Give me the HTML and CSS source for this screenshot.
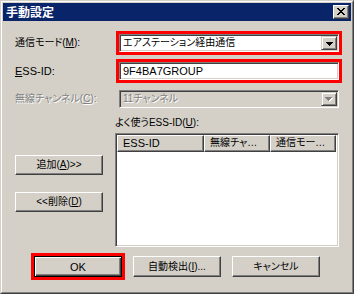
FILE: index.html
```html
<!DOCTYPE html>
<html lang="ja">
<head>
<meta charset="utf-8">
<title>手動設定</title>
<link rel="stylesheet" href="styles.css">
</head>
<body>
<div class="window">
  <div class="frame">
    <div class="titlebar">
      <span class="title">手動設定</span>
      <span class="close"><svg width="8" height="7" viewBox="0 0 8 7" shape-rendering="crispEdges"><path d="M0 0h2v1h-2zM6 0h2v1h-2zM1 1h2v1h-2zM5 1h2v1h-2zM2 2h4v1h-4zM3 3h2v1h-2zM2 4h4v1h-4zM1 5h2v1h-2zM5 5h2v1h-2zM0 6h2v1h-2zM6 6h2v1h-2z" fill="#000"/></svg></span>
    </div>
    <div class="content">
      <div class="form">
        <span class="lbl ja">通信モード(<u>M</u>):</span>
        <div class="combo hl"><span class="value ja">エアステーション経由通信</span><span class="drop"><svg width="7" height="4" viewBox="0 0 7 4" shape-rendering="crispEdges"><path d="M0 0h7v1h-7zM1 1h5v1h-5zM2 2h3v1h-3zM3 3h1v1h-1z" fill="#000"/></svg></span></div>
        <span class="lbl"><u>E</u>SS-ID:</span>
        <div class="edit hl"><span class="value">9F4BA7GROUP</span></div>
        <span class="lbl ja disabled">無線チャンネル(<u>C</u>):</span>
        <div class="combo off"><span class="value ja">11チャンネル</span><span class="drop"><svg width="8" height="5" viewBox="0 0 8 5" shape-rendering="crispEdges"><path d="M1 1h7v1h-7zM2 2h5v1h-5zM3 3h3v1h-3zM4 4h1v1h-1z" fill="#fff"/><path d="M0 0h7v1h-7zM1 1h5v1h-5zM2 2h3v1h-3zM3 3h1v1h-1z" fill="#808080"/></svg></span></div>
      </div>
      <div class="lists">
        <div class="side">
          <span class="btn ja add">追加(<u>A</u>)&gt;&gt;</span>
          <span class="btn ja del">&lt;&lt;削除(<u>D</u>)</span>
        </div>
        <div class="main">
          <div class="listlabel ja">よく使うESS-ID(<u>U</u>):</div>
          <div class="listview">
            <div class="header">
              <span class="col c1">ESS-ID</span>
              <span class="col ja c2">無線チャ…</span>
              <span class="col ja c3">通信モー…</span>
            </div>
          </div>
        </div>
      </div>
      <div class="actions">
        <span class="btn default">OK</span>
        <span class="btn ja">自動検出(<u>I</u>)...</span>
        <span class="btn ja">キャンセル</span>
      </div>
    </div>
  </div>
</div>
</body>
</html>
```
FILE: styles.css
```css
html, body {
  margin: 0;
  padding: 0;
  background: #D4D0C8;
}
body {
  font-family: "Liberation Sans", "Noto Sans CJK JP", sans-serif;
  font-size: 11px;
  color: #000;
  font-feature-settings: "palt";
}
.ja {
  font-size: 10px;
}
u { text-decoration: underline; text-underline-offset: 1px; }

.window {
  width: 354px;
  height: 294px;
  box-sizing: border-box;
  background: #D4D0C8;
  border: 1px solid;
  border-color: #D4D0C8 #404040 #404040 #D4D0C8;
}
.frame {
  height: 100%;
  box-sizing: border-box;
  border: 1px solid;
  border-color: #FFFFFF #808080 #808080 #FFFFFF;
  padding: 1px;
}
.titlebar {
  height: 18px;
  background: #0A246A;
  display: flex;
  align-items: center;
  justify-content: space-between;
  padding: 0 2px 0 3px;
}
.title {
  color: #fff;
  font-family: "Noto Sans CJK JP", sans-serif;
  font-weight: bold;
  font-size: 12px;
  line-height: 18px;
  font-feature-settings: normal;
}
.close {
  width: 16px;
  height: 14px;
  box-sizing: border-box;
  background: #D4D0C8;
  border: 1px solid;
  border-color: #FFFFFF #404040 #404040 #FFFFFF;
  box-shadow: inset -1px -1px #808080;
  display: flex;
  align-items: center;
  justify-content: center;
  padding: 0 1px 1px 0;
}
.close svg { display: block; }

.content {
  padding: 10px 0 0 12px;
}
.form {
  display: grid;
  grid-template-columns: 104px 220px;
  grid-auto-rows: 18px;
  row-gap: 10px;
  align-items: center;
  padding-top: 3px;
}
.lbl {
  line-height: 18px;
  white-space: nowrap;
}
.lbl.disabled, .combo.off .value {
  color: #808080;
  text-shadow: 1px 1px 0 #FFFFFF;
}
.combo, .edit {
  height: 18px;
  box-sizing: border-box;
  border: 1px solid;
  border-color: #808080 #FFFFFF #FFFFFF #808080;
  box-shadow: inset 1px 1px #404040, inset -1px -1px #D4D0C8;
  background: #fff;
  display: flex;
  align-items: center;
  padding: 1px;
}
.hl {
  outline: 3px solid #FF0000;
}
.combo.off {
  background: #D4D0C8;
}
.value {
  flex: 1;
  padding-left: 2px;
  line-height: 14px;
  white-space: nowrap;
}
.drop {
  width: 16px;
  height: 14px;
  box-sizing: border-box;
  background: #D4D0C8;
  border: 1px solid;
  border-color: #D4D0C8 #404040 #404040 #D4D0C8;
  box-shadow: inset 1px 1px #FFFFFF, inset -1px -1px #808080;
  display: flex;
  align-items: center;
  justify-content: center;
  padding-top: 1px;
}
.drop svg { display: block; }

.lists {
  display: grid;
  grid-template-columns: 100px 224px;
  margin-top: 8px;
}
.side {
  display: flex;
  flex-direction: column;
  padding-top: 39px;
}
.btn {
  width: 88px;
  height: 20px;
  box-sizing: border-box;
  background: #D4D0C8;
  border: 1px solid;
  border-color: #FFFFFF #404040 #404040 #FFFFFF;
  box-shadow: inset -1px -1px #808080;
  display: flex;
  align-items: center;
  justify-content: center;
  line-height: 14px;
  white-space: nowrap;
}
.btn.del { margin-top: 17px; }
.listlabel {
  line-height: 14px;
  margin-bottom: 3px;
  white-space: nowrap;
}
.listview {
  height: 114px;
  box-sizing: border-box;
  border: 1px solid;
  border-color: #808080 #FFFFFF #FFFFFF #808080;
  box-shadow: inset 1px 1px #404040, inset -1px -1px #D4D0C8;
  background: #fff;
  padding: 1px;
}
.header {
  display: flex;
  height: 17px;
}
.col {
  box-sizing: border-box;
  height: 17px;
  background: #D4D0C8;
  border: 1px solid;
  border-color: #FFFFFF #404040 #404040 #FFFFFF;
  box-shadow: inset -1px -1px #808080;
  line-height: 14px;
  padding-left: 5px;
  white-space: nowrap;
}
.c1 { width: 87px; }
.c2 { width: 66px; }
.c3 { width: 66px; }

.actions {
  display: flex;
  gap: 11px;
  margin-top: 9px;
  padding-left: 19px;
}
.actions .btn { height: 21px; }
.btn.default {
  border-color: #000;
  box-shadow: inset 1px 1px #FFFFFF, inset -1px -1px #404040, inset -2px -2px #808080;
  outline: 3px solid #FF0000;
}
```
